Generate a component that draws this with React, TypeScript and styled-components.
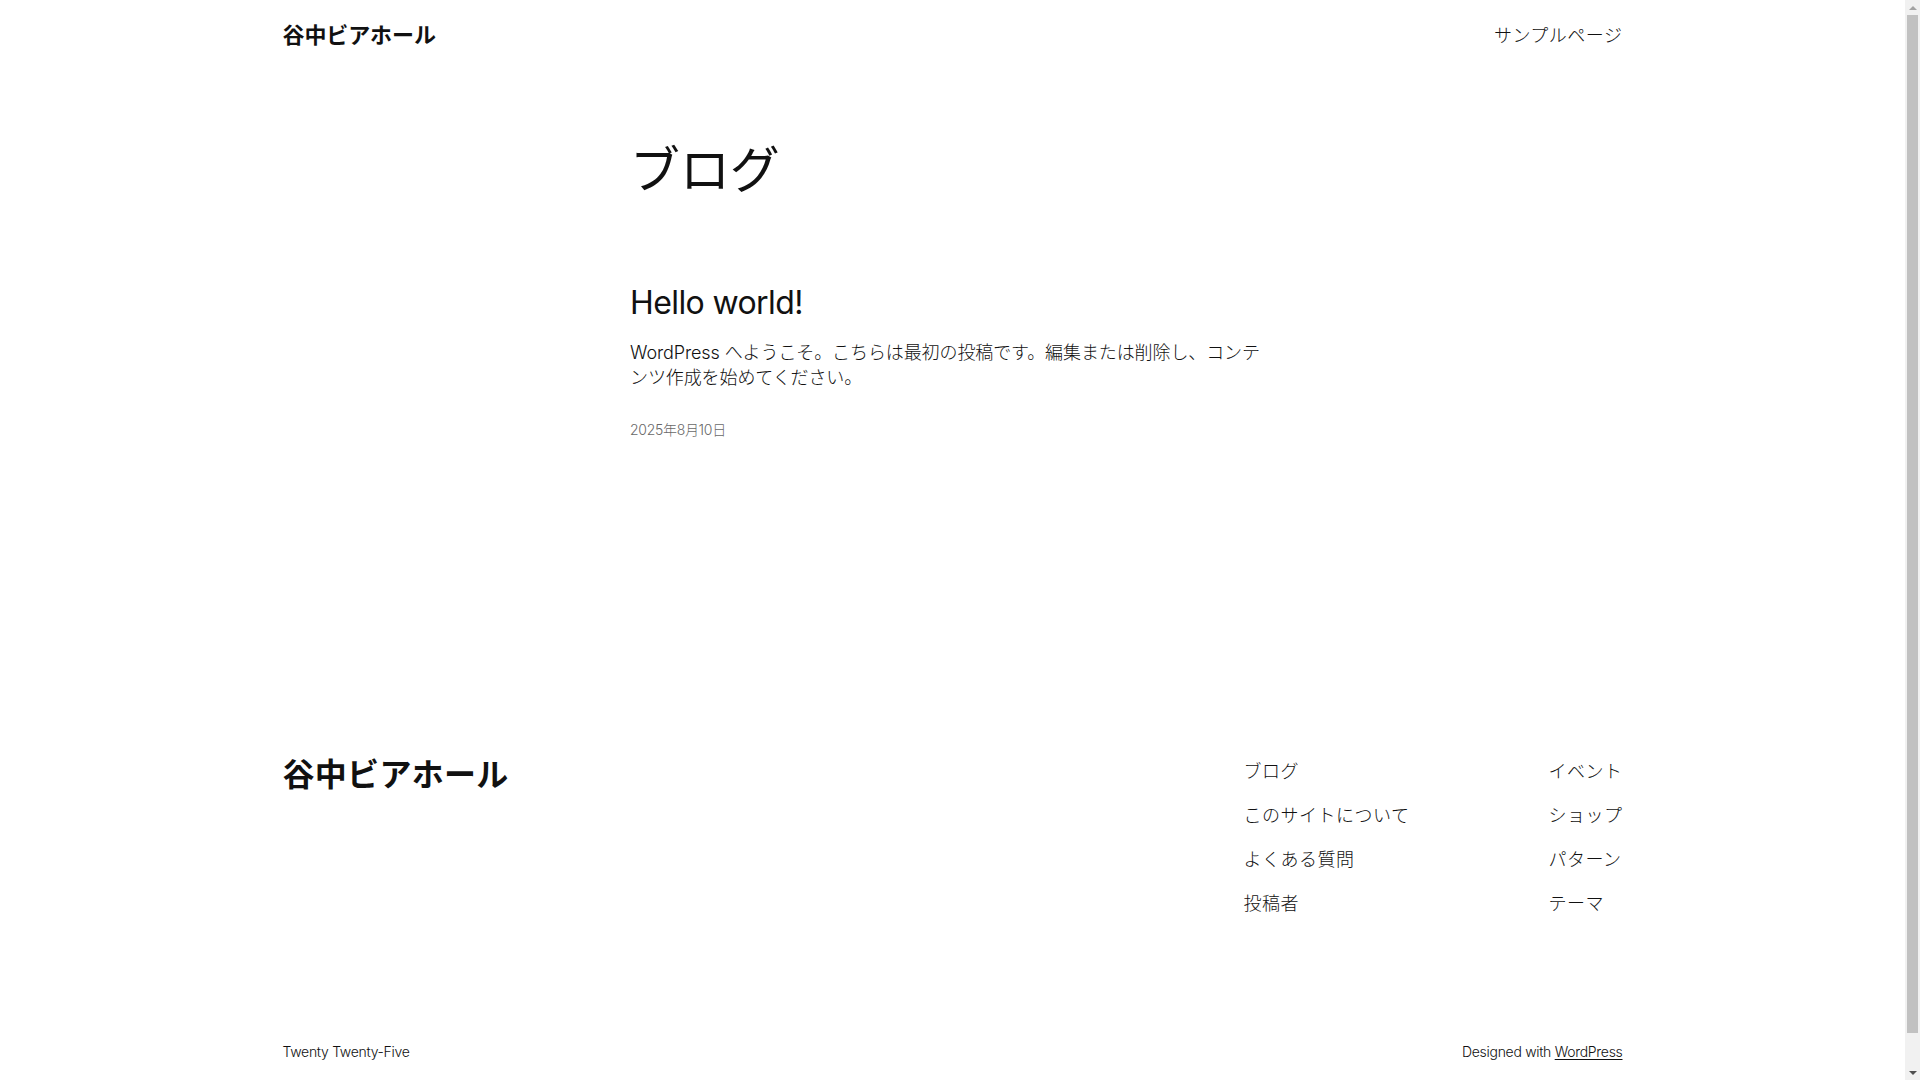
import React from "react";
import styled, { createGlobalStyle } from "styled-components";

const GlobalStyle = createGlobalStyle`
  html, body {
    margin: 0;
    padding: 0;
    background: #ffffff;
  }
  body {
    color: #111111;
    font-family: "Inter", "Noto Sans CJK JP", sans-serif;
    font-weight: 300;
    font-size: 22px;
    line-height: 1.4;
    letter-spacing: -0.1px;
    -webkit-font-smoothing: antialiased;
  }
  a {
    color: inherit;
    text-decoration: none;
  }
`;

const Page = styled.div`
  display: flex;
  flex-direction: column;
  padding-right: 15px;
`;

const Wide = styled.div`
  width: 1340px;
  max-width: calc(100% - 100px);
  margin: 0 auto;
`;

const HeaderBar = styled(Wide)`
  display: flex;
  align-items: center;
  justify-content: space-between;
  padding: 20px 0;
`;

const SiteTitle = styled.a<{ $size: number; $lh: string }>`
  font-size: ${(p) => p.$size}px;
  line-height: ${(p) => p.$lh};
  font-weight: 700;
  letter-spacing: ${(p) => (p.$size > 30 ? "0.3px" : "-0.1px")};
`;

const NavLink = styled.a`
  display: block;
  font-size: 18px;
  line-height: 1.4;
  font-weight: 300;
  letter-spacing: 0.5px;
`;

const Main = styled.main`
  margin-top: 70px;
`;

const Content = styled.div`
  width: 645px;
  margin: 0 auto;
`;

const PageHeading = styled.h1`
  margin: 0;
  font-size: 50px;
  line-height: 58.8px;
  font-weight: 400;
  letter-spacing: -0.1px;
`;

const PostList = styled.ul`
  list-style: none;
  margin: 85px 0 0;
  padding: 0;
`;

const PostItem = styled.li`
  display: flex;
  flex-direction: column;
`;

const PostTitle = styled.h2`
  margin: 0;
  font-size: 32px;
  line-height: 1.125;
  font-weight: 400;
  letter-spacing: -0.6px;
`;

const Excerpt = styled.p`
  margin: 19px 0 0;
  font-size: 18px;
  line-height: 1.4;
  word-break: break-all;
`;

const PostDate = styled.time`
  display: block;
  margin-top: 30px;
  font-size: 14px;
  line-height: 1.4;
  color: #686868;
  letter-spacing: -0.3px;
`;

const Footer = styled.footer`
  margin-top: 317px;
  padding-bottom: 52px;
`;

const FooterTop = styled(Wide)`
  display: flex;
  justify-content: space-between;
  align-items: flex-start;
`;

const FooterNavs = styled.div`
  display: flex;
  gap: 139px;
  padding-top: 2px;
`;

const NavColumn = styled.ul`
  list-style: none;
  margin: 0;
  padding: 0;
  display: flex;
  flex-direction: column;
  gap: 19px;
  font-size: 18px;
  line-height: 1.4;
`;

const FooterBottom = styled(Wide)`
  display: flex;
  justify-content: space-between;
  align-items: center;
  margin-top: 126px;
`;

const Small = styled.p`
  margin: 0;
  font-size: 14px;
  line-height: 1.4;
  letter-spacing: -0.3px;
`;

const Underlined = styled.a`
  text-decoration: underline;
  text-underline-offset: 2px;
  text-decoration-thickness: 1px;
`;

/* Browser scrollbar as seen in the screenshot, drawn over the page edge */
const ScrollTrack = styled.div`
  position: fixed;
  top: 0;
  right: 0;
  width: 15px;
  height: 100vh;
  background: #f1f1f1;
  display: flex;
  flex-direction: column;
  align-items: center;
`;

const ScrollArrow = styled.div<{ $down?: boolean }>`
  width: 15px;
  height: 15px;
  display: flex;
  align-items: center;
  justify-content: center;
  &::before {
    content: "";
    width: 0;
    height: 0;
    border-left: 4px solid transparent;
    border-right: 4px solid transparent;
    ${(p) =>
      p.$down
        ? "border-top: 4px solid #505050;"
        : "border-bottom: 4px solid #a3a3a3;"}
  }
`;

const ScrollThumb = styled.div`
  width: 11px;
  height: 1018px;
  background: #c1c1c1;
`;

const ScrollSpace = styled.div`
  flex: 1;
`;

const leftLinks = ["ブログ", "このサイトについて", "よくある質問", "投稿者"];
const rightLinks = ["イベント", "ショップ", "パターン", "テーマ"];

export default function App() {
  return (
    <Page>
      <GlobalStyle />
      <header>
        <HeaderBar>
          <SiteTitle href="#" $size={22} $lh="1.4">
            谷中ビアホール
          </SiteTitle>
          <nav>
            <NavLink href="#">サンプルページ</NavLink>
          </nav>
        </HeaderBar>
      </header>
      <Main>
        <Content>
          <PageHeading>ブログ</PageHeading>
          <PostList>
            <PostItem>
              <PostTitle>
                <a href="#">Hello world!</a>
              </PostTitle>
              <Excerpt>
                WordPress へようこそ。こちらは最初の投稿です。編集または削除し、コンテンツ作成を始めてください。
              </Excerpt>
              <PostDate dateTime="2025-08-10">2025年8月10日</PostDate>
            </PostItem>
          </PostList>
        </Content>
      </Main>
      <Footer>
        <FooterTop>
          <SiteTitle href="#" $size={32} $lh="1.125">
            谷中ビアホール
          </SiteTitle>
          <FooterNavs>
            <NavColumn>
              {leftLinks.map((l) => (
                <li key={l}>
                  <NavLink href="#">{l}</NavLink>
                </li>
              ))}
            </NavColumn>
            <NavColumn>
              {rightLinks.map((l) => (
                <li key={l}>
                  <NavLink href="#">{l}</NavLink>
                </li>
              ))}
            </NavColumn>
          </FooterNavs>
        </FooterTop>
        <FooterBottom>
          <Small>Twenty Twenty-Five</Small>
          <Small>
            Designed with <Underlined href="#">WordPress</Underlined>
          </Small>
        </FooterBottom>
      </Footer>
      <ScrollTrack aria-hidden="true">
        <ScrollArrow />
        <ScrollThumb />
        <ScrollSpace />
        <ScrollArrow $down />
      </ScrollTrack>
    </Page>
  );
}
